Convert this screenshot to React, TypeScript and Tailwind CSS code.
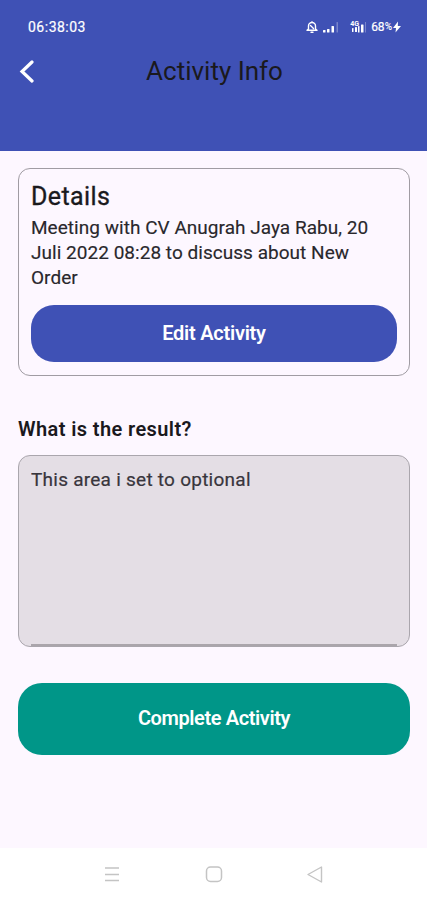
import React, { useState } from 'react';

const StatusBar: React.FC = () => (
  <div className="flex h-[52px] items-center justify-between pt-[2px] pl-7 pr-[25px] text-white">
    <span className="text-[14px] tracking-[0.5px] [-webkit-text-stroke:0.2px_currentColor]">06:38:03</span>
    <div className="flex items-center">
      <svg className="h-3 w-3" viewBox="0 0 12 12" fill="none" stroke="currentColor" strokeWidth="1.4" strokeLinecap="round" strokeLinejoin="round">
        <path d="M2.500 8V5a3.500 3.500 0 0 1 7 0v3l1.500 1.300H1L2.500 8zM5 11.300h2M6 .8v.5M4.500 4.500l3 3" />
      </svg>
      <svg className="ml-[5px] h-3 w-[17px]" viewBox="0 0 17 12" fill="currentColor">
        <rect x="0" y="9" width="2.500" height="2.500" rx="0.5" />
        <rect x="4" y="8" width="2.500" height="3.500" rx="0.5" />
        <rect x="8.5" y="5" width="2.500" height="6.500" rx="0.5" />
        <rect x="13.500" y="1" width="1.500" height="10.500" rx="0.5" opacity="0.3" />
      </svg>
      <div className="relative ml-[7px] h-3 w-[19px]">
        <span className="absolute left-[3px] top-0 text-[7px] font-bold leading-[6px]">4G</span>
        <svg className="h-3 w-[19px]" viewBox="0 0 19 12" fill="currentColor">
          <rect x="5" y="7" width="1.500" height="4" rx="0.5" />
          <rect x="8" y="6" width="2" height="5" rx="0.5" />
          <rect x="11" y="5" width="1.500" height="6.500" rx="0.5" />
          <rect x="14" y="3.500" width="2.500" height="8" rx="0.5" />
          <rect x="18" y="1" width="1" height="10.500" opacity="0.3" />
        </svg>
      </div>
      <span className="ml-[5px] text-[12px] leading-3 [-webkit-text-stroke:0.2px_currentColor]">68</span>
      <span className="pb-[1px] text-[10px] font-medium leading-[10px]">%</span>
      <svg className="h-3 w-[10px]" viewBox="0 0 9 12" fill="currentColor">
        <path d="M5.500 0.500 0.500 7h3L3 11.500 8.500 5H5.300z" />
      </svg>
    </div>
  </div>
);

const NavigationBar: React.FC = () => (
  <nav className="flex h-[52px] items-center justify-between bg-white px-[103px] text-[#c4c4c4]">
    <svg className="h-[18px] w-[18px]" viewBox="0 0 18 18" fill="none" stroke="currentColor" strokeWidth="1.5">
      <path d="M2 3h14M2 9.500h14M2 15.500h14" />
    </svg>
    <svg className="h-[18px] w-[18px]" viewBox="0 0 18 18" fill="none" stroke="currentColor" strokeWidth="1.5">
      <rect x="1.500" y="2" width="15" height="14.500" rx="4" />
    </svg>
    <svg className="h-[18px] w-[18px]" viewBox="0 0 18 18" fill="none" stroke="currentColor" strokeWidth="1.400" strokeLinejoin="round">
      <path d="M2 9.500 15.500 2v15z" />
    </svg>
  </nav>
);

const App: React.FC = () => {
  const [result, setResult] = useState('This area i set to optional');

  return (
    <div className="flex h-[900px] w-full flex-col bg-[#fdf7ff] font-['Roboto',sans-serif] text-[#1a191d]">
      <header className="h-[151px] bg-[#3f51b5]">
        <StatusBar />
        <div className="grid h-[38px] grid-cols-[1fr_auto_1fr] items-center pl-[18px] pr-[16px]">
          <button aria-label="Back" className="w-5 text-white">
            <svg className="h-6 w-[18px]" viewBox="0 0 18 24" fill="none" stroke="currentColor" strokeWidth="3.2" strokeLinecap="round">
              <path d="M14 3 4 12.500 14 22" />
            </svg>
          </button>
          <h1 className="text-[26px] leading-[38px]">Activity Info</h1>
        </div>
      </header>

      <main className="flex-1 pl-[18px] pr-[17px] pt-[17px]">
        <section className="h-[208px] rounded-[12px] border border-[#a09ca3] px-3 pt-[11px]">
          <h2 className="text-[25px] leading-[34px] tracking-[0.4px] [-webkit-text-stroke:0.35px_currentColor]">Details</h2>
          <p className="pt-[1px] text-[19px] leading-[25px] tracking-[0.03px] text-[#29272c] [-webkit-text-stroke:0.15px_currentColor]">
            Meeting with CV Anugrah Jaya Rabu, 20 Juli 2022 08:28 to discuss about New Order
          </p>
          <button className="mt-[15px] h-[57px] w-full rounded-[23px] bg-[#3f51b5] pb-[2px] text-[20px] font-semibold tracking-[-0.25px] text-white">
            Edit Activity
          </button>
        </section>

        <label htmlFor="result" className="mt-10 block text-[20px] font-semibold leading-[26px] tracking-[0.4px]">
          What is the result?
        </label>
        <div className="mt-[13px] h-[192px] rounded-[12px] border border-[#aaa6ad] bg-[#e4dee5] px-3">
          <textarea
            id="result"
            value={result}
            onChange={e => setResult(e.target.value)}
            className="block h-[190px] w-full resize-none border-b-2 border-[#aaa5ab] pt-[11px] text-[19px] leading-[25px] tracking-[0.25px] text-[#38353c] outline-none [-webkit-text-stroke:0.2px_currentColor]"
          />
        </div>

        <button className="mt-9 h-[72px] w-full rounded-[24px] bg-[#009688] pb-[2px] text-[20px] font-semibold tracking-[-0.4px] text-white">
          Complete Activity
        </button>
      </main>

      <NavigationBar />
    </div>
  );
};

export default App;
